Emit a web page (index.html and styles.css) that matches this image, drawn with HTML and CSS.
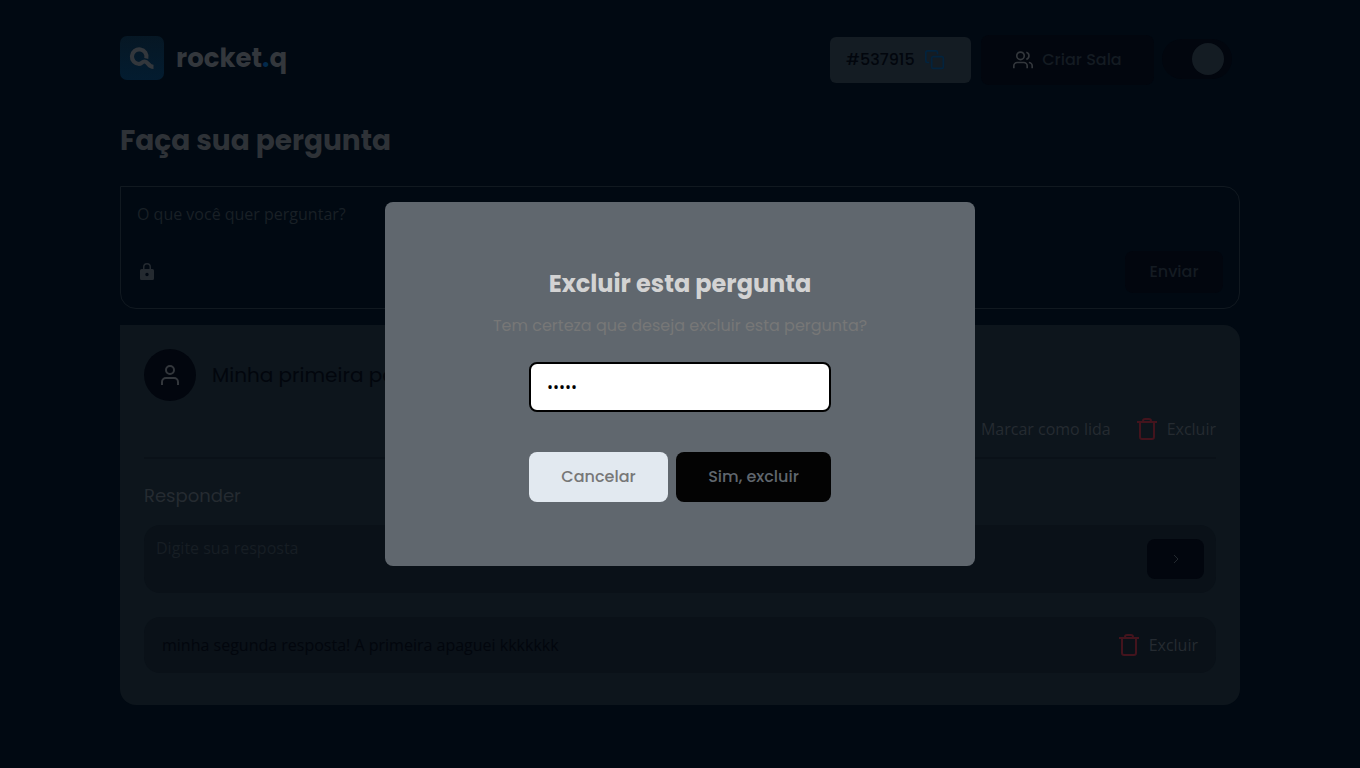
FILE: index.html
```html
<!DOCTYPE html>
<html lang="pt-BR">
<head>
<meta charset="utf-8">
<meta name="viewport" content="width=device-width, initial-scale=1">
<title>Rocket.q</title>
<link rel="stylesheet" href="styles.css">
</head>
<body>
<svg class="sprite" aria-hidden="true">
  <symbol id="trash" viewBox="0 0 24 24"><path d="M2 5h20M5 5v15a2 2 0 0 0 2 2h10a2 2 0 0 0 2-2V5M8 5V4a2 2 0 0 1 2-2h4a2 2 0 0 1 2 2v1"/></symbol>
</svg>
<header class="header">
  <a class="logo" href="#" aria-label="rocket.q">
    <svg class="logo-mark" viewBox="0 0 44 44" aria-hidden="true">
      <defs><linearGradient id="mark" x1="0" y1="0" x2="0" y2="1"><stop offset="0" stop-color="#061724"/><stop offset="1" stop-color="#031c30"/></linearGradient></defs>
      <rect width="44" height="44" rx="7" fill="url(#mark)"/>
      <path d="M26.300 22.500A7.300 7.300 0 1 0 19.300 28" fill="none" stroke="#33373c" stroke-width="4.200"/>
      <path d="M18.500 28C22 28 21.500 25.500 24.500 25.500C28.500 25.500 28 30.800 33.500 30.800" fill="none" stroke="#33373c" stroke-width="4.200"/>
    </svg>
    <span class="logo-name">rocket<span class="logo-dot">.</span>q</span>
  </a>
  <div class="header-actions">
    <button class="room-code" type="button">#537915
      <svg class="icon copy" viewBox="0 0 24 24" aria-hidden="true"><path d="M10 8h10a2 2 0 0 1 2 2v10a2 2 0 0 1-2 2H10a2 2 0 0 1-2-2V10a2 2 0 0 1 2-2zM5 15H3a2 2 0 0 1-2-2V3a2 2 0 0 1 2-2h10a2 2 0 0 1 2 2v2"/></svg>
    </button>
    <button class="button create" type="button">
      <svg class="icon users" viewBox="0 0 24 24" aria-hidden="true"><circle cx="9" cy="7" r="4.500"/><path d="M1 22v-3a4 4 0 0 1 4-4h8a4 4 0 0 1 4 4v3M16 2.700a4.500 4.500 0 0 1 0 8.600M19 15a4 4 0 0 1 4 4v3"/></svg>
      Criar Sala
    </button>
    <input class="toggle" type="checkbox" role="switch" aria-label="Tema escuro" checked>
  </div>
</header>
<main class="content">
  <h1 class="title">Faça sua pergunta</h1>
  <form class="ask">
    <textarea class="ask-text" rows="1" placeholder="O que você quer perguntar?" aria-label="Pergunta"></textarea>
    <div class="ask-footer">
      <svg class="lock" viewBox="0 0 20 20" aria-hidden="true"><path fill-rule="evenodd" d="M6 7V5a4 4 0 0 1 8 0v2h1.500A1.500 1.500 0 0 1 17 8.500v8a1.500 1.500 0 0 1-1.500 1.500h-11A1.500 1.500 0 0 1 3 16.500v-8A1.500 1.500 0 0 1 4.500 7zM7.500 7h5V5a2.500 2.500 0 0 0-5 0zM10 10.800a1.700 1.700 0 1 0 0 3.400a1.700 1.700 0 0 0 0-3.400z"/></svg>
      <button class="button send" type="button">Enviar</button>
    </div>
  </form>
  <section class="card">
    <div class="question">
      <span class="avatar"><svg class="icon user" viewBox="0 0 24 24" aria-hidden="true"><circle cx="12" cy="7" r="4"/><path d="M4 22v-3a4 4 0 0 1 4-4h8a4 4 0 0 1 4 4v3"/></svg></span>
      <p class="question-text">Minha primeira pergunta</p>
    </div>
    <div class="actions">
      <a class="action" href="#">Marcar como lida</a>
      <a class="action" href="#"><svg class="icon trash" aria-hidden="true"><use href="#trash"/></svg>Excluir</a>
    </div>
    <h2 class="subtitle">Responder</h2>
    <form class="reply">
      <textarea class="reply-text" rows="1" placeholder="Digite sua resposta" aria-label="Resposta"></textarea>
      <button class="button next" type="button" aria-label="Enviar resposta">
        <svg class="chevron" viewBox="0 0 8 10" aria-hidden="true"><path d="M2 1l4 4l-4 4"/></svg>
      </button>
    </form>
    <article class="answer">
      <p class="answer-text">minha segunda resposta! A primeira apaguei kkkkkkk</p>
      <a class="action" href="#"><svg class="icon trash" aria-hidden="true"><use href="#trash"/></svg>Excluir</a>
    </article>
  </section>
</main>
<div class="overlay">
  <form class="modal" role="dialog" aria-modal="true" aria-labelledby="modal-title">
    <h2 class="modal-title" id="modal-title">Excluir esta pergunta</h2>
    <p class="modal-text">Tem certeza que deseja excluir esta pergunta?</p>
    <div class="modal-controls">
      <input class="password" type="password" value="12345" size="1" aria-label="Senha">
      <div class="modal-buttons">
        <button class="modal-button cancel" type="button">Cancelar</button>
        <button class="modal-button confirm" type="button">Sim, excluir</button>
      </div>
    </div>
  </form>
</div>
</body>
</html>
```
FILE: styles.css
```css
:root {
  --bg: #010912;
  --card: #0d151c;
  --box: #0a1118;
  --dark: #02060e;
  --line: #111920;
  --muted: #252b31;
  --light: #2e3237;
  --display: Poppins, Inter, sans-serif;
  --text: "Open Sans", sans-serif;
}

* { box-sizing: border-box; margin: 0; }

body {
  min-height: 100vh;
  background: var(--bg);
  color: var(--muted);
  font: 16px/24px var(--text);
}

button, input, textarea { font: inherit; border: 0; }
button { cursor: pointer; }
a { color: inherit; text-decoration: none; }
.sprite { position: absolute; width: 0; height: 0; }

.icon {
  flex: none;
  width: 24px;
  height: 24px;
  fill: none;
  stroke: currentColor;
  stroke-width: 2;
  overflow: visible;
}

.header, .content {
  width: calc(100% - 48px);
  max-width: 1120px;
  margin: 0 auto;
}

.header {
  display: flex;
  align-items: center;
  justify-content: space-between;
  padding: 35px 8px 0 0;
}

.logo { display: flex; align-items: center; gap: 12px; padding-bottom: 4px; }
.logo-mark { width: 44px; height: 44px; }
.logo-name { color: #33373c; font: 700 26px/36px var(--display); }
.logo-dot { color: #032a4c; }

.header-actions { display: flex; align-items: center; gap: 8px; }

.room-code, .button {
  display: flex;
  align-items: center;
  justify-content: center;
  border-radius: 8px;
  font-family: var(--display);
  font-weight: 500;
}

.room-code {
  height: 46px;
  width: 141px;
  margin-right: 2px;
  padding: 0 16px;
  justify-content: flex-start;
  gap: 10px;
  border-radius: 6px;
  background: #141c23;
  color: #02060d;
}

.copy { width: 20px; height: 20px; color: #03233d; }

.button { background: var(--dark); color: #141b22; }
.create { width: 173px; height: 50px; gap: 9px; padding: 0; }
.users { width: 20px; height: 20px; color: #33373c; }

.toggle {
  appearance: none;
  display: flex;
  align-items: center;
  justify-content: flex-end;
  width: 70px;
  height: 40px;
  margin-bottom: 2px;
  padding: 0 8px;
  border-radius: 20px;
  background: var(--dark);
}

.toggle::before {
  content: "";
  width: 32px;
  height: 32px;
  border-radius: 50%;
  background: #141c23;
}

.title {
  margin: 35px 0 24px;
  color: var(--light);
  font: 700 28px/42px var(--display);
}

.ask {
  padding: 15px 16px;
  border: 1px solid var(--line);
  border-radius: 0 16px 16px 16px;
}

.ask-text, .reply-text {
  display: block;
  width: 100%;
  padding: 0;
  background: transparent;
  color: var(--muted);
  resize: none;
  overflow: hidden;
  outline: 0;
}

.ask-text::placeholder { color: #192026; }
.reply-text::placeholder { color: #171e24; }

.ask-footer {
  display: flex;
  align-items: center;
  justify-content: space-between;
  margin-top: 25px;
}

.lock { width: 20px; height: 20px; fill: #242a30; }
.send { width: 98px; height: 42px; padding: 0; }

.card {
  margin-top: 16px;
  padding: 24px 24px 32px;
  border-radius: 0 16px 16px 16px;
  background: var(--card);
}

.question { display: flex; align-items: center; gap: 16px; }

.avatar {
  display: flex;
  align-items: center;
  justify-content: center;
  width: 52px;
  height: 52px;
  border-radius: 50%;
  background: var(--dark);
}

.user { color: #33373c; }
.question-text { color: #02060d; font: 20px/30px var(--display); }

.actions {
  display: flex;
  justify-content: flex-end;
  gap: 24px;
  padding: 16px 0;
  border-bottom: 2px solid #0a1118;
}

.action { display: flex; align-items: center; gap: 8px; }
.trash { color: #43141d; }
.subtitle { margin: 23px 0 16px; font: 400 18px/27px var(--display); }

.reply {
  display: flex;
  align-items: center;
  gap: 16px;
  padding: 11px 12px 13px;
  border-radius: 16px;
  background: var(--box);
}

.reply-text { min-height: 44px; }
.next { flex: none; width: 57px; height: 40px; margin-top: 2px; padding: 0; }

.chevron { flex: none; width: 8px; height: 10px; fill: none; stroke: #23292f; stroke-width: 1; }

.answer {
  display: flex;
  align-items: center;
  justify-content: space-between;
  margin-top: 24px;
  padding: 16px 18px;
  border-radius: 16px;
  background: var(--box);
}

.answer-text { color: #02060d; }

.overlay {
  position: fixed;
  inset: 0;
  display: flex;
  align-items: center;
  justify-content: center;
}

.modal {
  display: flex;
  flex-direction: column;
  align-items: center;
  width: 590px;
  max-width: 100%;
  padding: 64px;
  border-radius: 8px;
  background: #60676e;
  font-family: var(--display);
}

.modal-title { color: #d3d3d3; font: 700 24px/36px var(--display); }
.modal-text { margin: 12px 0 24px; color: #777; }
.modal-controls { display: flex; flex-direction: column; gap: 40px; }

.password {
  width: 100%;
  height: 50px;
  padding: 0 16px;
  border: 2px solid #000;
  border-radius: 8px;
  background: #fff;
  color: #000;
  font-family: var(--text);
  outline: 0;
}

.modal-buttons { display: flex; gap: 8px; }

.modal-button {
  height: 50px;
  padding: 0;
  border-radius: 8px;
  font-family: var(--display);
  font-weight: 500;
}

.cancel { width: 139px; background: #e2e9f0; color: #777; }
.confirm { width: 155px; background: #030303; color: #60676e; }
```
